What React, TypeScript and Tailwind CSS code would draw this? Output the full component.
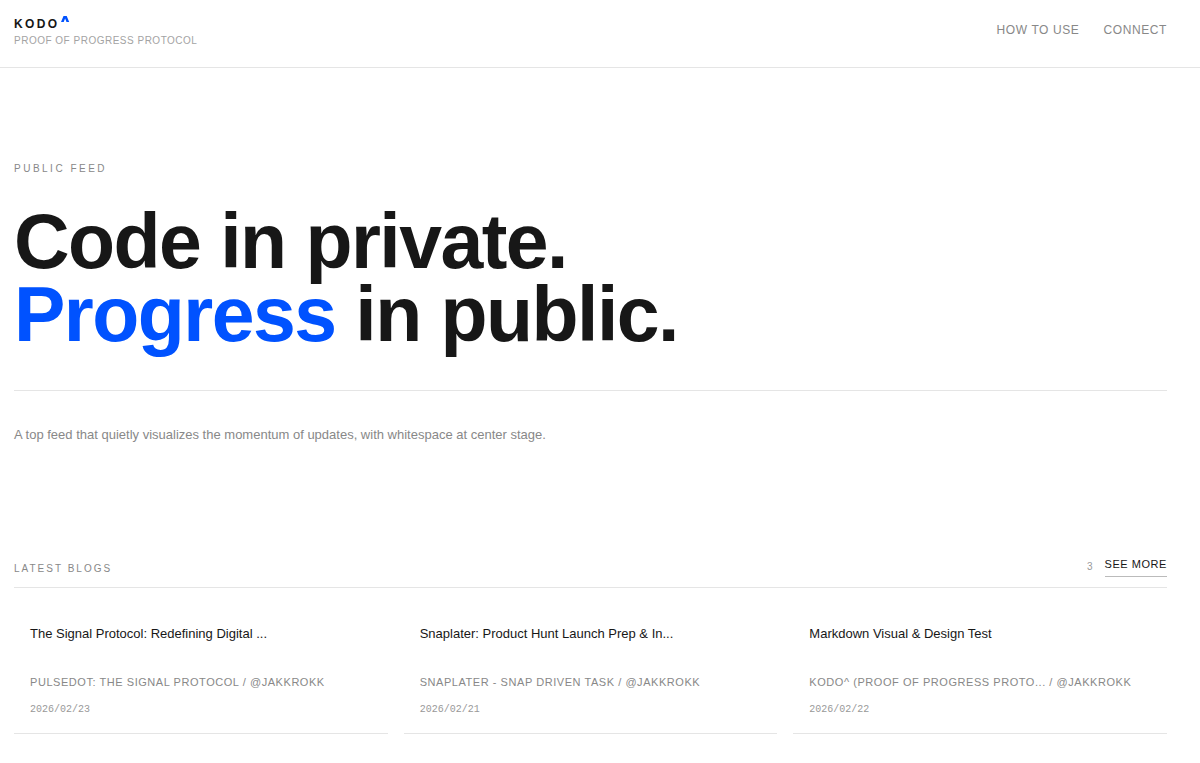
interface Post {
  title: string;
  project: string;
  author: string;
  date: string;
}

const posts: Post[] = [
  {
    title: "The Signal Protocol: Redefining Digital ...",
    project: "PulseDot: The Signal Protocol",
    author: "@jakkrokk",
    date: "2026/02/23",
  },
  {
    title: "Snaplater: Product Hunt Launch Prep & In...",
    project: "Snaplater - Snap Driven Task",
    author: "@jakkrokk",
    date: "2026/02/21",
  },
  {
    title: "Markdown Visual & Design Test",
    project: "KODO^ (Proof of Progress Proto...",
    author: "@jakkrokk",
    date: "2026/02/22",
  },
];

function Header() {
  return (
    <header className="border-b border-[#e5e5e5]">
      <div className="flex items-start justify-between pt-4 pb-[18px] pl-[14px] pr-[33px]">
        <a href="#" className="block">
          <span className="flex items-start text-xs leading-4 font-semibold tracking-[0.2em]">
            KODO
            <svg viewBox="0 0 10 6" className="w-[10px] h-[6px]" fill="#0052ff" aria-hidden="true">
              <path d="M1 6 L3.5 0 H6.7 L9.2 6 H6.5 L5.1 2.6 L3.7 6 Z" />
            </svg>
          </span>
          <span className="mt-px block text-[10px] leading-4 tracking-[0.05em] text-[#a3a3a3] uppercase">
            Proof of Progress Protocol
          </span>
        </a>
        <nav className="flex gap-6 pt-1 text-xs leading-5 tracking-[0.05em] text-[#888] uppercase">
          <a href="#how-to-use">How to use</a>
          <a href="#connect">Connect</a>
        </nav>
      </div>
    </header>
  );
}

function Hero() {
  return (
    <section className="pt-[93px]">
      <p className="text-[10px] leading-4 tracking-[0.25em] text-[#888] uppercase">Public Feed</p>
      <div className="mt-7 pb-[39px] border-b border-[#e5e5e5]">
        <h1 className="text-[77px] leading-[73px] font-bold tracking-[-0.02em]">
          Code in private.
          <br />
          <span className="text-[#0052ff]">Progress</span> in public.
        </h1>
      </div>
      <p className="mt-8 text-[13px] leading-6 text-[#888]">
        A top feed that quietly visualizes the momentum of updates, with whitespace at center stage.
      </p>
    </section>
  );
}

function PostCard({ post }: { post: Post }) {
  return (
    <a href="#post" className="block px-4 pt-9 pb-[15px] border-b border-[#e5e5e5]">
      <h3 className="text-[13px] leading-5">{post.title}</h3>
      <p className="mt-7 text-[11px] leading-5 tracking-[0.05em] text-[#888] uppercase">
        {post.project} / {post.author}
      </p>
      <time className="mt-2.5 block font-['Liberation_Mono',monospace] text-[10px] leading-4 text-[#999]">
        {post.date}
      </time>
    </a>
  );
}

export default function App() {
  return (
    <div className="min-h-screen bg-white font-['Liberation_Sans',Arial,sans-serif] text-[#171717]">
      <Header />
      <main className="pl-[14px] pr-[33px]">
        <Hero />
        <section className="mt-[109px]">
          <div className="flex items-end justify-between pb-[10px] border-b border-[#e5e5e5]">
            <h2 className="text-[10px] leading-4 tracking-[0.2em] text-[#888] uppercase">Latest Blogs</h2>
            <div className="flex items-center gap-3">
              <span className="text-[10px] text-[#999]">{posts.length}</span>
              <a
                href="#blogs"
                className="pb-1 border-b border-[#bbb] text-[11px] leading-4 tracking-[0.05em] uppercase"
              >
                See more
              </a>
            </div>
          </div>
          <div className="grid grid-cols-3 gap-4">
            {posts.map((post) => (
              <PostCard key={post.date} post={post} />
            ))}
          </div>
        </section>
      </main>
    </div>
  );
}
